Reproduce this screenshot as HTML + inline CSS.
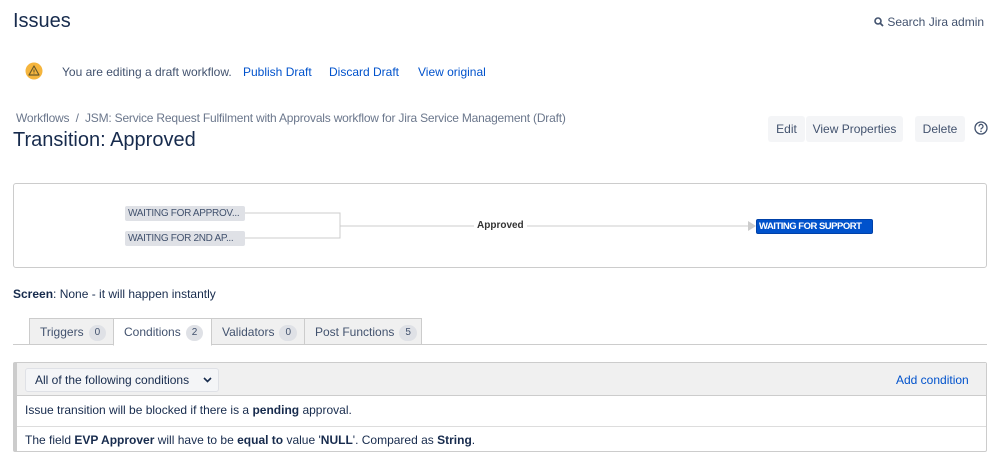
<!DOCTYPE html>
<html><head><meta charset="utf-8"><style>
*{box-sizing:border-box;margin:0;padding:0}
body{width:999px;height:469px;background:#fff;font-family:"Liberation Sans",sans-serif;font-size:12px;color:#172b4d;position:relative;overflow:hidden}
.a{position:absolute;white-space:nowrap}
a,.lk{color:#0052cc;text-decoration:none}
.btn{position:absolute;top:116px;height:26px;background:#f4f5f7;border-radius:3px;line-height:26px;text-align:center;color:#42526e;font-size:12px}
.node{position:absolute;height:15px;line-height:15px;font-size:10px;padding:0 3px;border-radius:2px;letter-spacing:-0.3px;white-space:nowrap;overflow:hidden}
.tab{position:absolute;top:318px;height:27px;border:1px solid #ccc;background:#f0f0f0;line-height:26px;padding-left:10px;font-size:12px;color:#42526e}
.bd{display:inline-block;background:#dfe1e6;border-radius:9px;padding:0 6px;height:16px;line-height:16px;font-size:10px;margin-left:5px;vertical-align:1px}
</style></head><body>
<div class="a" style="left:13px;top:10px;font-size:20px;color:#172b4d">Issues</div>
<div class="a" style="left:874px;top:15px;font-size:12px;color:#42526e">
<svg width="10" height="10" viewBox="0 0 10 10" style="vertical-align:-1px"><circle cx="4" cy="4" r="3" fill="none" stroke="#42526e" stroke-width="1.6"/><path d="M6 6L9 9" stroke="#42526e" stroke-width="1.8"/></svg> Search Jira admin</div>
<svg class="a" style="left:25px;top:62px" width="18" height="18" viewBox="0 0 18 18"><circle cx="9" cy="9" r="8.5" fill="#f5b53d"/><path d="M9 4L14 13H4Z" fill="none" stroke="#6b5a2a" stroke-width="1.2" stroke-linejoin="round"/><path d="M9 7.5V10.5M9 11.5V12" stroke="#6b5a2a" stroke-width="1.1"/></svg>
<div class="a" style="left:62px;top:65px;color:#42526e">You are editing a draft workflow.</div>
<div class="a lk" style="left:243px;top:65px">Publish Draft</div>
<div class="a lk" style="left:329px;top:65px">Discard Draft</div>
<div class="a lk" style="left:418px;top:65px">View original</div>
<div class="a" style="left:16px;top:111px;color:#6b778c;letter-spacing:-0.2px">Workflows &nbsp;/ &nbsp;JSM: Service Request Fulfilment with Approvals workflow for Jira Service Management (Draft)</div>
<div class="a" style="left:13px;top:129px;font-size:20px">Transition: Approved</div>
<div class="btn" style="left:768px;width:37px">Edit</div>
<div class="btn" style="left:806px;width:97px">View Properties</div>
<div class="btn" style="left:915px;width:50px">Delete</div>
<svg class="a" style="left:974px;top:121px" width="14" height="14" viewBox="0 0 14 14"><circle cx="7" cy="7" r="6" fill="none" stroke="#42526e" stroke-width="1.3"/><path d="M5 5.5a2 2 0 1 1 2.5 1.8c-.5.2-.5.6-.5 1.2" fill="none" stroke="#42526e" stroke-width="1.2"/><circle cx="7" cy="10.3" r=".8" fill="#42526e"/></svg>
<div class="a" style="left:13px;top:183px;width:974px;height:85px;border:1px solid #ccc;border-radius:3px"></div>
<svg class="a" style="left:0;top:190px" width="999" height="70"><path d="M245 23H340V48H245M340 36H752" fill="none" stroke="#ccc" stroke-width="1"/><path d="M748 31L756 36L748 41Z" fill="#ccc"/></svg>
<div class="node" style="left:125px;top:206px;width:120px;background:#dfe1e6;color:#42526e">WAITING FOR APPROV...</div>
<div class="node" style="left:125px;top:231px;width:120px;background:#dfe1e6;color:#42526e">WAITING FOR 2ND AP...</div>
<div class="a" style="left:474px;top:220px;background:#fff;padding:0 3px;font-size:10px;font-weight:bold;color:#333">Approved</div>
<div class="node" style="left:756px;top:219px;width:117px;background:#0052cc;color:#fff;font-weight:bold;border:1px solid #0041a8;line-height:13px;letter-spacing:-0.5px;font-size:9.5px;padding:0 2px">WAITING FOR SUPPORT</div>
<div class="a" style="left:13px;top:287px"><b>Screen</b>: None - it will happen instantly</div>
<div class="a" style="left:13px;top:344px;width:974px;height:1px;background:#ccc"></div>
<div class="tab" style="left:29px;width:85px">Triggers<span class="bd">0</span></div>
<div class="tab" style="left:113px;width:99px;background:#fff;border-bottom-color:#fff;height:28px">Conditions<span class="bd">2</span></div>
<div class="tab" style="left:211px;width:94px">Validators<span class="bd">0</span></div>
<div class="tab" style="left:304px;width:118px">Post Functions<span class="bd">5</span></div>
<div class="a" style="left:13px;top:362px;width:974px;height:90px;border:1px solid #ccc;border-left:4px solid #ccc;border-radius:2px"></div>
<div class="a" style="left:17px;top:363px;width:969px;height:33px;background:#f0f0f0;border-bottom:1px solid #ccc"></div>
<div class="a" style="left:25px;top:368px;width:194px;height:24px;background:#f4f5f7;border:1px solid #dfe1e6;border-radius:3px;line-height:22px;padding-left:9px;color:#172b4d">All of the following conditions
<svg style="position:absolute;right:6px;top:8px" width="9" height="6" viewBox="0 0 9 6"><path d="M1 1L4.5 4.5L8 1" fill="none" stroke="#172b4d" stroke-width="1.6"/></svg></div>
<div class="a lk" style="left:896px;top:373px">Add condition</div>
<div class="a" style="left:25px;top:403px">Issue transition will be blocked if there is a <b>pending</b> approval.</div>
<div class="a" style="left:17px;top:426px;width:969px;height:1px;background:#ddd"></div>
<div class="a" style="left:25px;top:433px">The field <b>EVP Approver</b> will have to be <b>equal to</b> value '<b>NULL</b>'. Compared as <b>String</b>.</div>
</body></html>
